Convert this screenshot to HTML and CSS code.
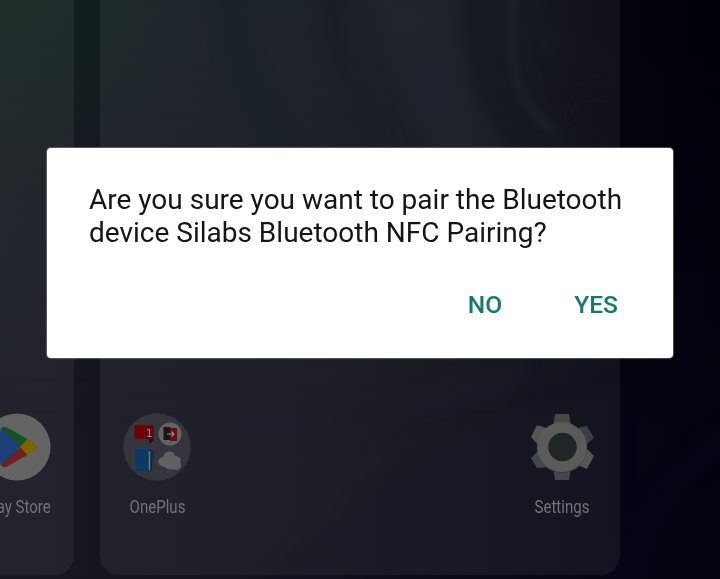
FILE: index.html
```html
<!DOCTYPE html>
<html lang="en">
<head>
<meta charset="utf-8">
<title>Bluetooth pairing</title>
<link rel="stylesheet" href="styles.css">
</head>
<body>
<main class="screen">
  <svg class="wallpaper" viewBox="0 0 720 579" aria-hidden="true">
    <defs>
      <linearGradient id="base" x1="0" y1="0" x2="1" y2="0">
        <stop offset="0" stop-color="#182020"/><stop offset=".13" stop-color="#141d20"/>
        <stop offset=".4" stop-color="#11181f"/><stop offset=".65" stop-color="#10131b"/>
        <stop offset=".83" stop-color="#04050d"/><stop offset="1" stop-color="#00000a"/>
      </linearGradient>
      <linearGradient id="lower" x1="0" y1="0" x2="1" y2="0">
        <stop offset="0" stop-color="#171621"/><stop offset=".45" stop-color="#13111c"/>
        <stop offset=".7" stop-color="#0a0915"/><stop offset=".86" stop-color="#040413"/><stop offset="1" stop-color="#04020f"/>
      </linearGradient>
      <linearGradient id="fade" x1="0" y1="0" x2="0" y2="1">
        <stop offset="0" stop-color="#000"/><stop offset=".75" stop-color="#fff"/>
      </linearGradient>
      <radialGradient id="green"><stop offset="0" stop-color="#10231e" stop-opacity=".6"/><stop offset="1" stop-color="#10231e" stop-opacity="0"/></radialGradient>
      <mask id="down"><rect width="720" height="579" fill="url(#fade)"/></mask>
      <filter id="soft" x="-30%" y="-30%" width="160%" height="160%" color-interpolation-filters="sRGB"><feGaussianBlur stdDeviation="7"/></filter>
      <filter id="fine" color-interpolation-filters="sRGB"><feGaussianBlur stdDeviation="4"/></filter>
    </defs>
    <rect width="720" height="579" fill="url(#base)"/>
    <rect width="720" height="579" fill="url(#lower)" mask="url(#down)"/>
    <ellipse cx="20" cy="0" rx="170" ry="160" fill="url(#green)"/>
    <g filter="url(#soft)">
      <path d="M215-10C220 60 240 110 280 160L300 160C270 110 245 60 245-10Z" fill="#0b151d" opacity=".7"/>
      <path d="M320-10C320 50 340 90 390 150L360 100C345 60 350 20 345-10Z" fill="#0a0f18" opacity=".7"/>
      <path d="M370-10C390 60 400 110 440 160L520 160C460 110 455 50 455-10Z" fill="#1a1e27" opacity=".4"/>
      <path d="M460-10C460 70 490 120 530 160L590 150C520 100 520 40 520-10Z" fill="#080b13" opacity=".7"/>
      <path d="M310 465C370 405 440 370 530 365L500 400C430 400 370 430 310 465Z" fill="#100f1e" opacity=".5"/>
      <path d="M260 579C360 480 480 410 620 390L620 579Z" fill="#0c0a1a" opacity=".4"/>
      <path d="M610 579C640 500 670 460 730 420L730 450C680 480 655 530 645 579Z" fill="#080718" opacity=".6"/>
    </g>
    <path d="M514-5C505 60 515 105 555 132" filter="url(#fine)" fill="none" stroke="#1b1d26" stroke-width="9" opacity=".5"/>
    <path d="M565 120C567 92 580 78 602 75M569 125C570 103 586 97 604 102M560 125C570 126 576 122 581 113" fill="none" stroke="#1b1d26" stroke-width="1.500" opacity=".22"/>
  </svg>

  <div class="pages">
    <section class="page page-left">
      <div class="app">
        <svg class="icon" viewBox="0 0 68 68" aria-hidden="true">
          <circle cx="34" cy="34" r="33.500" fill="#646464"/>
          <path d="M19 15Q17 16 17 19V49Q17 52 19 53L38 34Z" fill="#1f3e7c"/>
          <path d="M18 16Q20 12 25 15L44.500 26L38 34Z" fill="#12532a"/>
          <path d="M18 52Q20 56 25 53L44.500 42L38 34Z" fill="#73201d"/>
          <path d="M44.500 26L51 30Q57 34 51 38L44.500 42L37 34Z" fill="#806200"/>
        </svg>
        <span class="label">Play Store</span>
      </div>
    </section>
    <section class="page page-main">
      <div class="app">
        <svg class="icon" viewBox="0 0 68 68" aria-hidden="true">
          <circle cx="34" cy="34" r="33.700" fill="#35363d"/>
          <path d="M11.500 12H30.500V26H11.500Z" fill="#690007"/><path d="M25.500 26H30.500V27L27 31Z" fill="#2e070c"/>
          <text class="badge" x="23" y="24">1</text>
          <circle cx="47" cy="21" r="11.500" fill="#646464"/>
          <path d="M40.500 14H47V27H40.500Z" fill="#151719"/><path d="M47 15H54V28H47Z" fill="#680b12"/>
          <path d="M44 21H51M48.500 18.500L51 21L48.500 23.500" fill="none" stroke="#969191" stroke-width="1.100"/>
          <path d="M12.500 36H27V58.500H12.500Z" fill="#063a67"/><path d="M25 37H29V57H25Z" fill="#111e2d"/><path d="M25.500 38H27.500V57H25.500Z" fill="#667583"/><path d="M27.500 37H30.500V47L28.500 49V58H27.500Z" fill="#082f52"/>
          <path d="M42 54C34 54 33 45 40 44C42 37 51 37 52 43C57 43 59 47 57 49C60 53 57 57 53 57L49 56C46 57 44 56 42 54Z" fill="#606164"/>
        </svg>
        <span class="label">OnePlus</span>
      </div>
      <div class="app">
        <svg class="icon" viewBox="0 0 68 68" aria-hidden="true">
          <path d="M27 1H41L43 14H25ZM25 54H43L41 67H27Z" fill="#454849"/>
          <path d="M52 14L59 13L66 25L58 32L46 23Z" fill="#394045"/>
          <path d="M3 45L12 36L24 54L9 55Z" fill="#43484a"/>
          <path d="M3 24L9 12L24 17L12 34ZM58 35L66 43L59 56L45 50Z" fill="#555655"/>
          <circle cx="34" cy="35" r="25" fill="#3a3d3e"/>
          <circle cx="34" cy="34" r="25" fill="#5b5b5a"/>
          <circle cx="34.500" cy="34" r="14.300" fill="#202628"/>
        </svg>
        <span class="label">Settings</span>
      </div>
    </section>
  </div>

  <section class="dialog" role="dialog" aria-modal="true">
    <p class="message">Are you sure you want to pair the Bluetooth device Silabs Bluetooth NFC Pairing?</p>
    <div class="actions">
      <button class="action">NO</button>
      <button class="action">YES</button>
    </div>
  </section>
</main>
</body>
</html>
```
FILE: styles.css
```css
* { box-sizing: border-box; }
body { margin: 0; background: #070710; font-family: Roboto, "Liberation Sans", sans-serif; }
.screen { position: relative; width: 720px; height: 579px; overflow: hidden; }
.wallpaper { position: absolute; inset: 0; width: 100%; height: 100%; }
.pages { position: relative; display: flex; gap: 26px; height: 575px; }
.page {
  display: flex;
  align-items: flex-end;
  padding-bottom: 55px;
  background: rgba(255, 255, 255, .055);
}
.page-left { width: 74px; justify-content: flex-end; border-radius: 0 0 19px; }
.page-main { width: 520px; justify-content: space-between; padding-right: 19px; padding-left: 18px; border-radius: 0 0 19px 19px; }
.app { display: flex; flex: none; flex-direction: column; align-items: center; gap: 14px; width: 78px; }
.page-left .app { width: 114px; }
.icon { display: block; width: 68px; height: 68px; }
.badge { font: 10px "DejaVu Sans", sans-serif; fill: #a48d8f; }
.label {
  color: #737378;
  font-size: 17.5px;
  line-height: 25px;
  white-space: nowrap;
  transform: scaleX(.86);
}
.dialog {
  position: absolute;
  top: 148px;
  left: 47px;
  display: flex;
  flex-direction: column;
  justify-content: space-between;
  width: 626px;
  height: 210px;
  padding: 35px 42px 28px;
  border-radius: 4px;
  background: #fff;
  box-shadow: 0 0 1px 1px rgba(150, 150, 150, .5);
}
.message { width: 545px; margin: 0; color: #151515; font-size: 28px; line-height: 33px; }
.actions { display: flex; justify-content: flex-end; gap: 72px; padding-right: 13px; }
.action {
  padding: 0;
  border: 0;
  background: none;
  color: #117c6c;
  font: 500 24.6px/50px Roboto, "Liberation Sans", sans-serif;
}
```
